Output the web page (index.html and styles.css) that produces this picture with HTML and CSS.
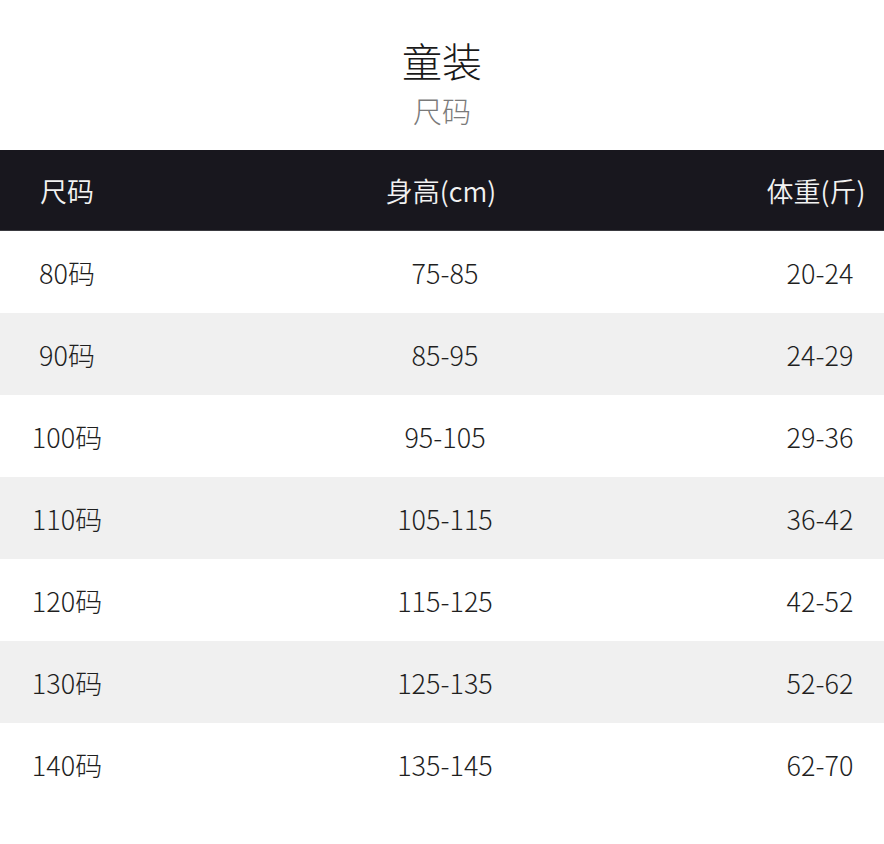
FILE: index.html
```html
<!DOCTYPE html>
<html lang="zh">
<head>
<meta charset="utf-8">
<link rel="stylesheet" href="styles.css">
</head>
<body>
<div class="page">
  <header class="heading">
    <div class="title">童装</div>
    <div class="subtitle">尺码</div>
  </header>
  <div class="table">
    <div class="row head"><span>尺码</span><span>身高(cm)</span><span>体重(斤)</span></div>
    <div class="row"><span>80码</span><span>75-85</span><span>20-24</span></div>
    <div class="row alt"><span>90码</span><span>85-95</span><span>24-29</span></div>
    <div class="row"><span>100码</span><span>95-105</span><span>29-36</span></div>
    <div class="row alt"><span>110码</span><span>105-115</span><span>36-42</span></div>
    <div class="row"><span>120码</span><span>115-125</span><span>42-52</span></div>
    <div class="row alt"><span>130码</span><span>125-135</span><span>52-62</span></div>
    <div class="row"><span>140码</span><span>135-145</span><span>62-70</span></div>
  </div>
</div>
</body>
</html>
```
FILE: styles.css
```css
html, body {
  margin: 0;
  padding: 0;
  background: #ffffff;
}
.page {
  width: 884px;
  height: 844px;
  font-family: "Noto Sans CJK SC", "Noto Sans", sans-serif;
  font-weight: 300;
  color: #222222;
}
.heading {
  display: flex;
  flex-direction: column;
  align-items: center;
  padding-top: 36px;
  padding-bottom: 20px;
}
.title {
  font-size: 40px;
  line-height: 48px;
  color: #1a1a1a;
}
.subtitle {
  margin-top: 6px;
  font-size: 29px;
  line-height: 40px;
  color: #7a7a7a;
}
.table {
  display: flex;
  flex-direction: column;
}
.row {
  display: grid;
  grid-template-columns: 134px 1fr 128px;
  align-items: center;
  height: 82px;
  font-size: 27px;
  color: #1f1f1f;
}
.row span {
  text-align: center;
  white-space: nowrap;
}
.row.head {
  height: 81px;
  background: #18171e;
  color: #f2f2f2;
  font-size: 27px;
  font-weight: 350;
  grid-template-columns: 134px 1fr 136px;
  border-bottom: 1px solid #3a3a40;
  box-sizing: border-box;
}
.row.alt {
  background: #f0f0f0;
}
```
